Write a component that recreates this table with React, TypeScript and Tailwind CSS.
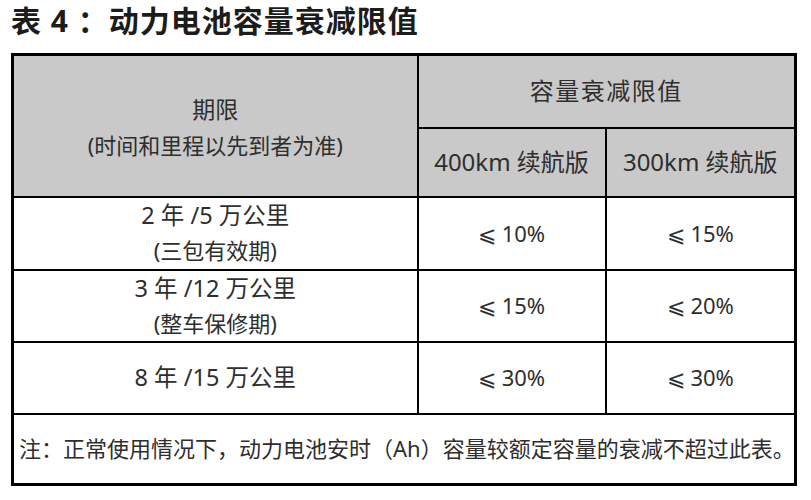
const font = '"Noto Sans", "Noto Sans CJK SC", sans-serif'

const rows = [
  { main: '2 年 /5 万公里', sub: '(三包有效期)', a: '⩽ 10%', b: '⩽ 15%', h: 'h-[73px]' },
  { main: '3 年 /12 万公里', sub: '(整车保修期)', a: '⩽ 15%', b: '⩽ 20%', h: 'h-[72px]' },
  { main: '8 年 /15 万公里', sub: '', a: '⩽ 30%', b: '⩽ 30%', h: 'h-[72px]' },
]

export default function App() {
  return (
    <div className="w-[811px] h-[500px] bg-white overflow-hidden pl-[11px] pt-[3px]" style={{ fontFamily: font }}>
      <h1 className="text-[30px] leading-[36px] font-bold tracking-[1px] text-[#1c1c1c]">表 4 ：动力电池容量衰减限值</h1>

      <table className="mt-[14px] w-[783px] table-fixed border-collapse border-[3px] border-black text-[#2e2e2e] text-[22px] text-center">
        <colgroup>
          <col className="w-[405px]" />
          <col className="w-[188px]" />
          <col className="w-[190px]" />
        </colgroup>
        <thead className="bg-[#c9c9c9]">
          <tr className="h-[73px]">
            <th rowSpan={2} className="border-2 border-black font-normal leading-[36px] pt-[2px]">
              <div className="text-[23px]">期限</div>
              <div>(时间和里程以先到者为准)</div>
            </th>
            <th colSpan={2} className="border-2 border-black font-normal text-[24px] tracking-[1.5px]">
              容量衰减限值
            </th>
          </tr>
          <tr className="h-[69px]">
            <th className="border-2 border-black font-normal text-[24px]">400km 续航版</th>
            <th className="border-2 border-black font-normal text-[24px]">300km 续航版</th>
          </tr>
        </thead>
        <tbody>
          {rows.map((r) => (
            <tr key={r.main} className={r.h}>
              <td className="border-2 border-black leading-[35px]">
                <div className="text-[23.5px]">{r.main}</div>
                {r.sub && <div>{r.sub}</div>}
              </td>
              <td className="border-2 border-black">{r.a}</td>
              <td className="border-2 border-black">{r.b}</td>
            </tr>
          ))}
          <tr className="h-[71px]">
            <td colSpan={3} className="border-2 border-black text-[22px] text-left pl-[5px] whitespace-nowrap overflow-hidden">
              注：正常使用情况下，动力电池安时（Ah）容量较额定容量的衰减不超过此表。
            </td>
          </tr>
        </tbody>
      </table>
    </div>
  )
}
